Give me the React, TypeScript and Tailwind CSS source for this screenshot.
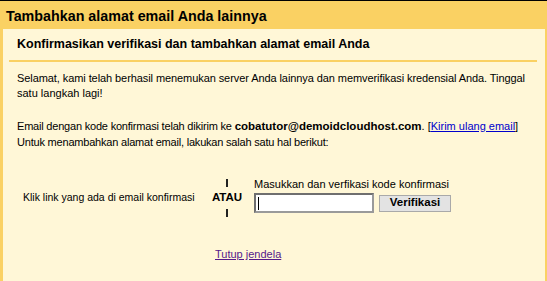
import React from "react";

const App = () => {
  return (
    <div
      className="w-[547px] h-[281px] overflow-hidden border-t border-black bg-[#fad163] flex flex-col text-[11px] text-black"
      style={{ fontFamily: '"Liberation Sans", Arial, sans-serif' }}
    >
      <div className="h-[28px] shrink-0 flex items-center pl-[6px] pt-[2px] text-[14.3px] font-bold leading-none">
        Tambahkan alamat email Anda lainnya
      </div>
      <div className="flex-1 ml-[3px] mr-[2px] bg-[#fff7d7] flex flex-col">
        <div className="ml-[6px] mr-[8px] border-b-2 border-[#fad163] pl-[8px] h-[33px] pb-[1px] flex items-center text-[12.5px] font-bold">
          Konfirmasikan verifikasi dan tambahkan alamat email Anda
        </div>
        <div className="pl-[14px] pr-[10px] pt-[9px] leading-[15px]">
          <div className="whitespace-nowrap tracking-[-0.08px]">
            Selamat, kami telah berhasil menemukan server Anda lainnya dan memverifikasi kredensial Anda. Tinggal
          </div>
          <div>satu langkah lagi!</div>
        </div>
        <div className="pl-[14px] pt-[17px] leading-[16px]">
          <div className="whitespace-nowrap">
            <span className="tracking-[-0.2px]">Email dengan kode konfirmasi telah dikirim ke </span>
            <span className="font-bold text-[11.5px]">cobatutor@demoidcloudhost.com</span>. [
            <a href="#" className="text-[#0000cc] underline">
              Kirim ulang email
            </a>
            ]
          </div>
          <div className="tracking-[-0.2px]">Untuk menambahkan alamat email, lakukan salah satu hal berikut:</div>
        </div>
        <div className="flex items-start pt-[25px]">
          <div className="w-[210px] pl-[20px] mt-[15px] leading-[15px] text-[10.5px] whitespace-nowrap">
            Klik link yang ada di email konfirmasi
          </div>
          <div className="w-[28px] flex flex-col items-center font-bold text-[11.5px] leading-[15px]">
            <span className="h-[15px] flex items-center">
              <span className="block w-[2px] h-[8px] bg-[#222]" />
            </span>
            <span>ATAU</span>
            <span className="h-[15px] flex items-center">
              <span className="block w-[2px] h-[8px] bg-[#222]" />
            </span>
          </div>
          <div className="ml-[13px] mt-[2px] flex flex-col">
            <div className="leading-[14px] whitespace-nowrap">Masukkan dan verfikasi kode konfirmasi</div>
            <div className="flex items-center gap-[5px] mt-[2px]">
              <div className="w-[120px] h-[20px] bg-white border-2 border-t-[#6f6f6f] border-l-[#6f6f6f] border-b-[#9a9a9a] border-r-[#9a9a9a] flex items-center pl-[2px]">
                <span className="block w-[1px] h-[13px] bg-black" />
              </div>
              <button
                type="button"
                className="w-[72px] h-[17px] bg-[#e3e3e3] border border-[#a9a9a9] font-bold text-[11.5px] leading-none"
              >
                Verifikasi
              </button>
            </div>
          </div>
        </div>
        <div className="pl-[212px] pt-[27px] leading-[15px]">
          <a href="#" className="text-[#551a8b] underline">
            Tutup jendela
          </a>
        </div>
      </div>
    </div>
  );
};

export default App;
